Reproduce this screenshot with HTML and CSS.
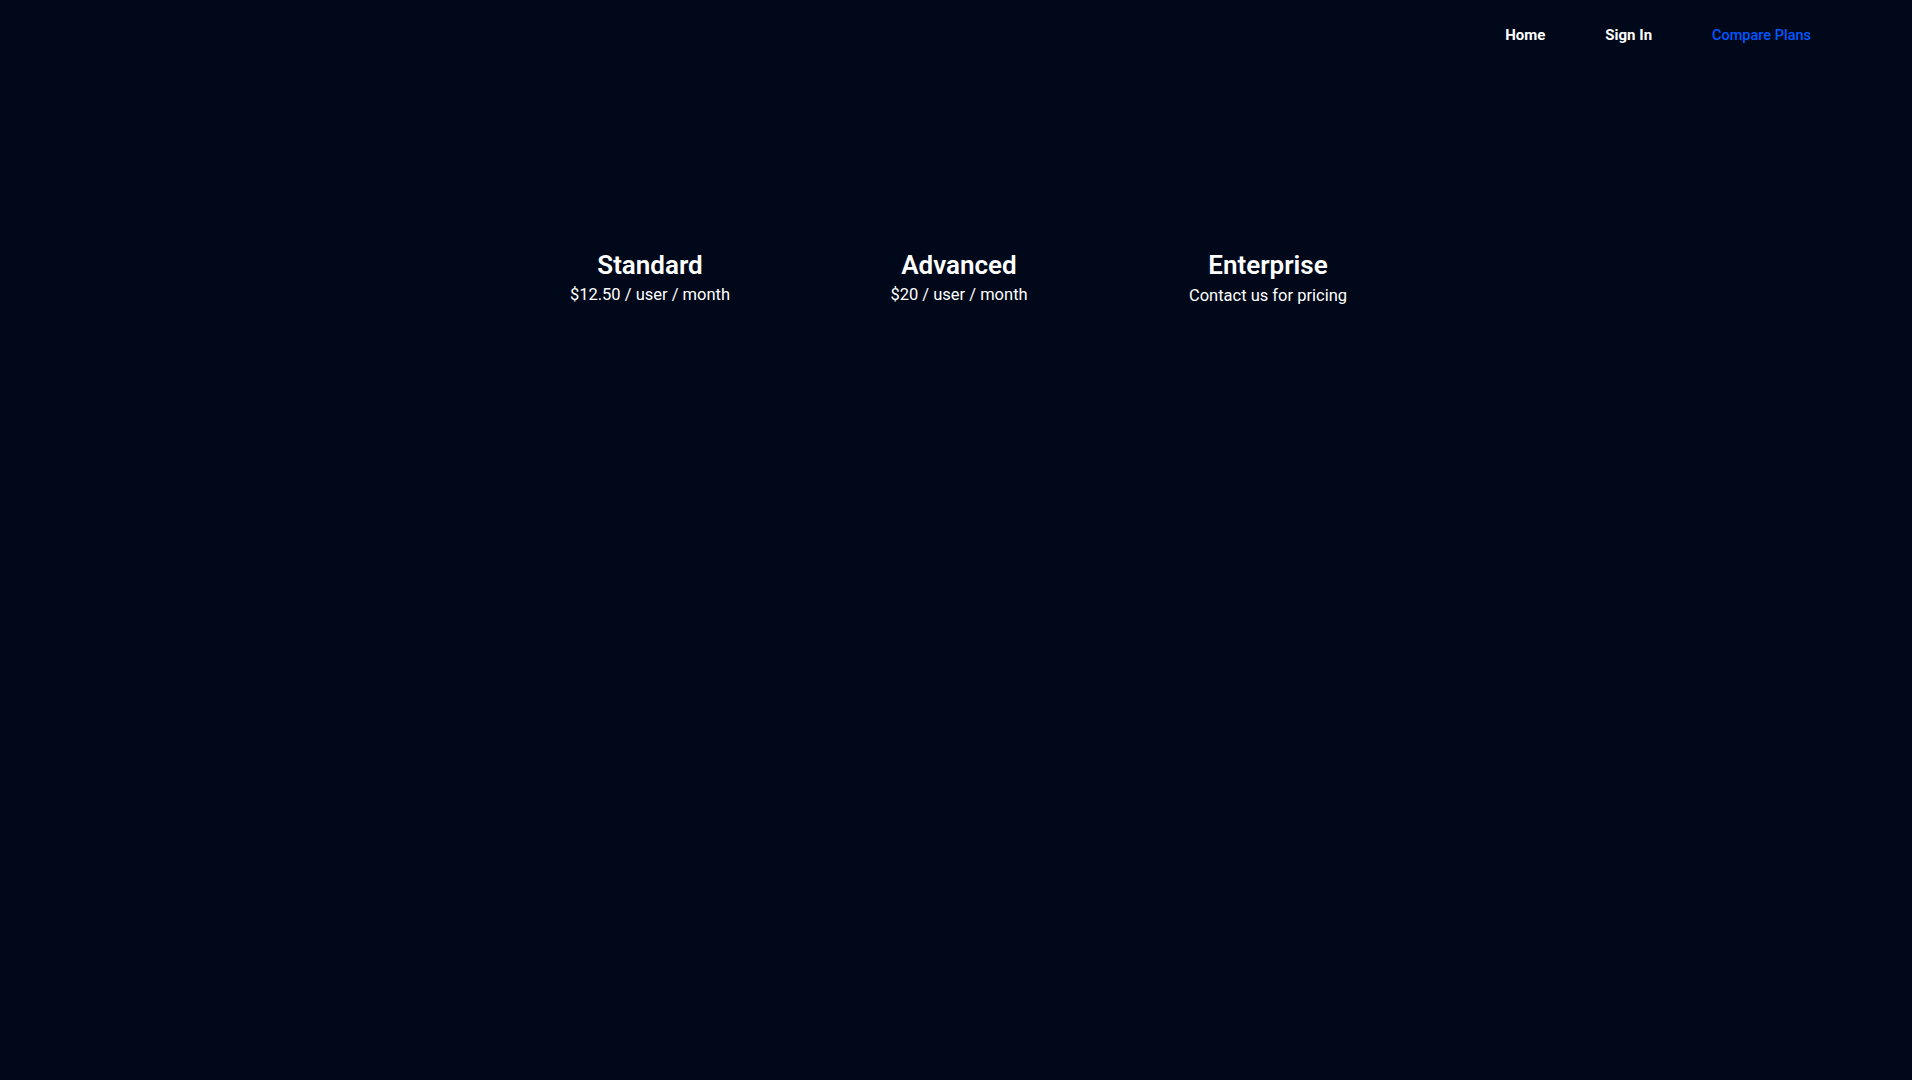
FILE: index.html
```html
<!DOCTYPE html>
<html lang="en">
<head>
<meta charset="utf-8">
<title>Compare Plans</title>
<link rel="stylesheet" href="styles.css">
</head>
<body>
<header class="topbar">
  <nav class="nav">
    <a class="nav-link" href="#">Home</a>
    <a class="nav-link" href="#">Sign In</a>
    <a class="nav-link nav-link-active" href="#">Compare Plans</a>
  </nav>
</header>
<main class="plans">
  <section class="plan">
    <h2 class="plan-name">Standard</h2>
    <p class="plan-price">$12.50 / user / month</p>
  </section>
  <section class="plan">
    <h2 class="plan-name">Advanced</h2>
    <p class="plan-price">$20 / user / month</p>
  </section>
  <section class="plan">
    <h2 class="plan-name">Enterprise</h2>
    <p class="plan-price plan-price-contact">Contact us for pricing</p>
  </section>
</main>
</body>
</html>
```
FILE: styles.css
```css
html, body {
  margin: 0;
  padding: 0;
  background: #00081a;
  color: #ffffff;
  font-family: Roboto, "Liberation Sans", sans-serif;
}

body {
  min-height: 1080px;
}

.topbar {
  display: flex;
  justify-content: flex-end;
  padding: 25px 101px 0 0;
}

.nav {
  display: flex;
  align-items: baseline;
  gap: 60px;
}

.nav-link {
  color: #ffffff;
  text-decoration: none;
  font-size: 15px;
  font-weight: 700;
  line-height: 20px;
}

.nav-link-active {
  color: #0057ff;
  font-size: 14.5px;
  font-weight: 500;
}

.plans {
  display: flex;
  justify-content: center;
  padding-top: 203px;
  padding-left: 6px;
}

.plan {
  width: 309px;
  display: flex;
  flex-direction: column;
  align-items: center;
}

.plan-name {
  margin: 0;
  font-size: 26px;
  font-weight: 600;
  line-height: 32px;
}

.plan-price {
  margin: 4px 0 0;
  font-size: 16.5px;
  line-height: 20px;
}

.plan-price-contact {
  margin-top: 5px;
}
```
